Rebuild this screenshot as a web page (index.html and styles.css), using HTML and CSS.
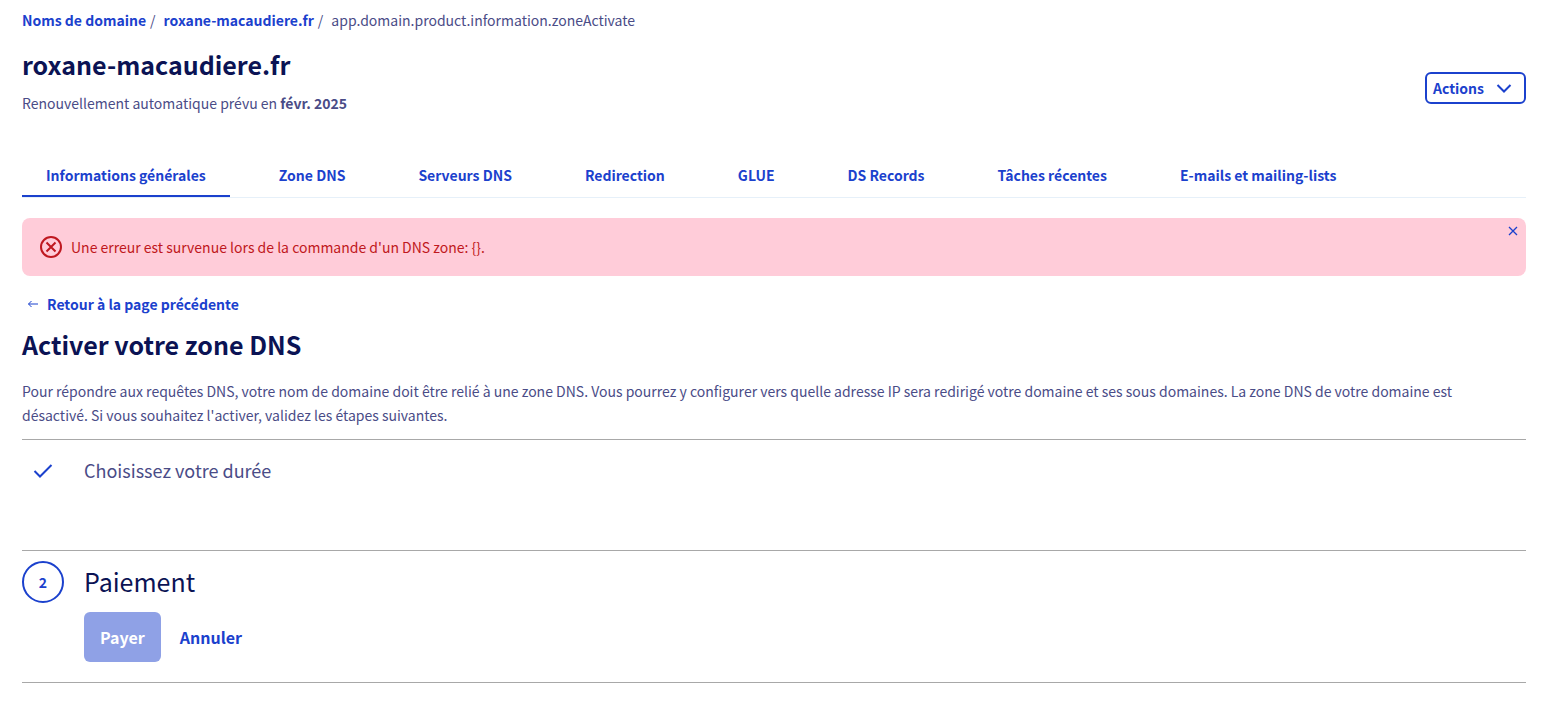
FILE: index.html
```html
<!DOCTYPE html>
<html lang="fr">
<head>
    <meta charset="UTF-8">
    <meta name="viewport" content="width=device-width, initial-scale=1.0">
    <title>roxane-macaudiere.fr</title>
    <link rel="stylesheet" href="styles.css">
</head>
<body>
    <nav class="breadcrumb" aria-label="Fil d'Ariane">
        <a href="#">Noms de domaine</a>
        <span class="separator">/</span>
        <a href="#">roxane-macaudiere.fr</a>
        <span class="separator">/</span>
        <span>app.domain.product.information.zoneActivate</span>
    </nav>

    <header class="page-header">
        <div class="title">
            <h1>roxane-macaudiere.fr</h1>
            <p class="renewal">Renouvellement automatique prévu en <strong>févr. 2025</strong></p>
        </div>
        <button type="button" class="actions">
            Actions
            <svg width="16" height="16" viewBox="0 0 16 16"><path d="M1.5 5 L8 11.5 L14.5 5"/></svg>
        </button>
    </header>

    <nav class="tabs">
        <a href="#" class="active">Informations générales</a>
        <a href="#">Zone DNS</a>
        <a href="#">Serveurs DNS</a>
        <a href="#">Redirection</a>
        <a href="#">GLUE</a>
        <a href="#">DS Records</a>
        <a href="#">Tâches récentes</a>
        <a href="#">E-mails et mailing-lists</a>
    </nav>

    <main>
        <div class="message" role="alert">
            <svg width="22" height="22" viewBox="0 0 22 22"><circle cx="11" cy="11" r="10"/><path d="M6.5 6.5 L15.5 15.5 M15.5 6.5 L6.5 15.5"/></svg>
            <span>Une erreur est survenue lors de la commande d'un DNS zone: {}.</span>
            <button type="button" class="close" aria-label="Fermer">
                <svg width="10" height="10" viewBox="0 0 10 10"><path d="M1 1 L9 9 M9 1 L1 9"/></svg>
            </button>
        </div>

        <a href="#" class="back">
            <svg width="12" height="10" viewBox="0 0 12 10"><path d="M11 5 H1.5 M4.5 2 L1.5 5 L4.5 8"/></svg>
            Retour à la page précédente
        </a>

        <h2>Activer votre zone DNS</h2>
        <p class="intro">Pour répondre aux requêtes DNS, votre nom de domaine doit être relié à une zone DNS. Vous pourrez y configurer vers quelle adresse IP sera redirigé votre domaine et ses sous domaines. La zone DNS de votre domaine est désactivé. Si vous souhaitez l'activer, validez les étapes suivantes.</p>

        <section class="step done">
            <div class="bullet">
                <svg width="20" height="16" viewBox="0 0 20 16"><path d="M1.5 8 L7 13.5 L18.5 2"/></svg>
            </div>
            <h3>Choisissez votre durée</h3>
        </section>

        <section class="step current">
            <div class="bullet">2</div>
            <div>
                <h3>Paiement</h3>
                <div class="buttons">
                    <button type="button" class="primary" disabled>Payer</button>
                    <button type="button" class="ghost">Annuler</button>
                </div>
            </div>
        </section>
    </main>
</body>
</html>
```

FILE: styles.css
```css
* {
    box-sizing: border-box;
}
body {
    margin: 0;
    padding: 8px 31px 40px 22px;
    background: #fff;
    color: #4a4c87;
    font-family: "Source Sans Pro", "Noto Sans CJK SC", sans-serif;
    font-size: 14px;
    line-height: 24px;
}
h1, h2, h3, p {
    margin: 0;
}
a {
    color: #1b41cd;
    font-weight: 600;
    text-decoration: none;
}
button {
    padding: 0;
    border: 0;
    background: none;
    color: #1b41cd;
    font: inherit;
    font-weight: 600;
    cursor: pointer;
}
svg {
    flex: none;
    fill: none;
    stroke: currentColor;
    stroke-width: 2;
}
h1, h2 {
    color: #0b1354;
    font-size: 25px;
    font-weight: 700;
    line-height: 32px;
}

/* header */
.breadcrumb {
    display: flex;
}
.separator {
    margin: 0 8px 0 4px;
}
.page-header {
    display: flex;
    justify-content: space-between;
    align-items: center;
    padding-top: 16px;
}
.title {
    padding-bottom: 13px;
}
.renewal {
    margin-top: 11px;
}
.actions {
    display: flex;
    align-items: center;
    gap: 12px;
    height: 32px;
    padding: 0 12px 0 6px;
    border: 2px solid #1b41cd;
    border-radius: 6px;
}

/* tabs */
.tabs {
    display: flex;
    gap: 25px;
    margin-top: 24px;
    border-bottom: 1px solid #e6f0f9;
}
.tabs a {
    padding: 11px 24px 8px;
    border-bottom: 2px solid transparent;
}
.tabs a.active {
    border-bottom-color: #1b41cd;
}

/* error message */
.message {
    display: flex;
    position: relative;
    align-items: center;
    gap: 9px;
    margin-top: 20px;
    padding: 17px 18px;
    border-radius: 8px;
    background: #ffccd9;
    color: #bf1820;
}
.close {
    display: flex;
    position: absolute;
    top: 8px;
    right: 8px;
}
.close svg {
    stroke-width: 1.3;
}
.back {
    display: inline-flex;
    align-items: center;
    gap: 8px;
    margin-top: 16px;
    padding-left: 5px;
}
.back svg {
    stroke-width: 1;
}
h2 {
    margin-top: 12px;
}
.intro {
    margin: 19px 0 12px;
    padding-right: 24px;
}

/* order steps */
.step {
    display: flex;
    gap: 20px;
    border-top: 1px solid #a8a8a8;
}
.bullet {
    display: flex;
    flex: none;
    align-items: center;
    justify-content: center;
    width: 42px;
    height: 42px;
    color: #1b41cd;
    font-weight: 700;
}
.step h3 {
    font-weight: 400;
    line-height: 40px;
}
.done {
    padding: 10px 0 58px;
}
.done h3 {
    font-size: 18px;
}
.current {
    padding: 10px 0 20px;
    border-bottom: 1px solid #a8a8a8;
}
.current .bullet {
    border: 2px solid #1b41cd;
    border-radius: 50%;
}
.current h3 {
    color: #0b1354;
    font-size: 25px;
}
.buttons {
    display: flex;
    gap: 19px;
    margin-top: 11px;
    font-size: 16px;
}
.primary {
    height: 50px;
    padding: 0 16px;
    border-radius: 6px;
    background: #8fa1e6;
    color: #fff;
    font-weight: 700;
}
```
